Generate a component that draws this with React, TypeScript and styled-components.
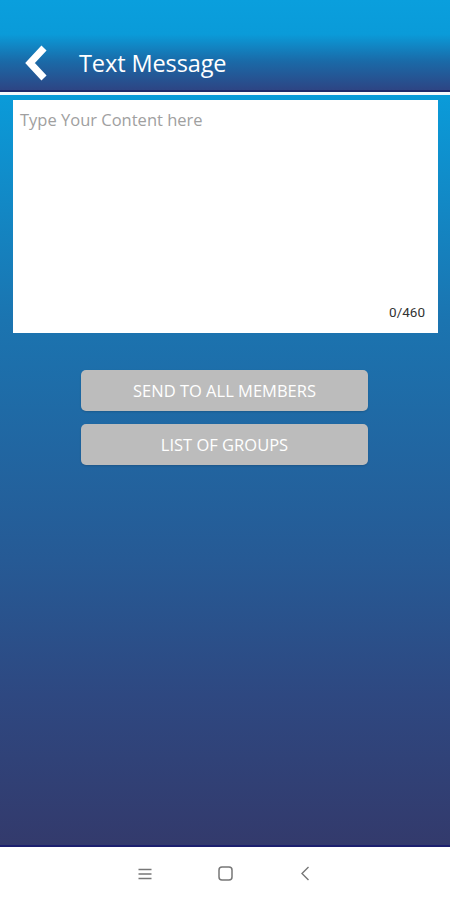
import React from "react";
import styled, { createGlobalStyle } from "styled-components";

const GlobalStyle = createGlobalStyle`
  html, body {
    margin: 0;
    padding: 0;
    width: 450px;
    height: 900px;
    overflow: hidden;
    font-family: "Open Sans", "Noto Sans", sans-serif;
  }
`;

const Screen = styled.div`
  width: 450px;
  height: 900px;
  display: flex;
  flex-direction: column;
`;

const Header = styled.header`
  height: 92px;
  flex-shrink: 0;
  display: flex;
  align-items: flex-end;
  padding: 0 0 7px 22px;
  box-sizing: border-box;
  background: linear-gradient(to bottom, #0a9fdd 0%, #0a9bd9 38%, #1a6aa8 68%, #2d4584 100%);
  border-bottom: 2px solid #1f2b6c;
  gap: 29px;
`;

const BackButton = styled.button`
  border: none;
  background: none;
  padding: 0;
  width: 28px;
  height: 36px;
  display: flex;
  align-items: center;
  cursor: pointer;
  margin-bottom: 2px;
`;

const Title = styled.h1`
  margin: 0;
  color: #ffffff;
  font-size: 23.5px;
  font-weight: 500;
  line-height: 40px;
  letter-spacing: -0.1px;
`;

const Divider = styled.div`
  height: 3px;
  background: #f4f8fc;
  flex-shrink: 0;
`;

const Body = styled.main`
  flex: 1;
  display: flex;
  flex-direction: column;
  align-items: center;
  padding: 5px 12px 0 13px;
  background: linear-gradient(to bottom, #0a9bd9 0%, #1b74b0 30%, #265a95 62%, #2e4881 80%, #333a6c 100%);
  border-bottom: 2px solid #1c1f6e;
`;

const MessageBox = styled.div`
  position: relative;
  width: 100%;
  height: 233px;
  background: #ffffff;
  box-sizing: border-box;
`;

const MessageInput = styled.textarea`
  width: 100%;
  height: 100%;
  border: none;
  outline: none;
  resize: none;
  box-sizing: border-box;
  padding: 8px 7px;
  font-family: "Open Sans", "Noto Sans", sans-serif;
  font-size: 16.5px;
  color: #333;
  background: transparent;

  &::placeholder {
    color: #a0a0a0;
  }
`;

const Counter = styled.span`
  position: absolute;
  right: 13px;
  bottom: 13px;
  font-size: 13.5px;
  color: #333;
  font-family: "Roboto", "Noto Sans", sans-serif;
`;

const Actions = styled.div`
  margin-top: 37px;
  display: flex;
  flex-direction: column;
  gap: 13px;
  width: 287px;
  margin-right: 2px;
`;

const ActionButton = styled.button`
  height: 41px;
  border: none;
  border-radius: 5px;
  background: #bcbcbc;
  color: #ffffff;
  font-family: "Open Sans", "Noto Sans", sans-serif;
  font-size: 16.5px;
  font-weight: 500;
  text-transform: uppercase;
  cursor: pointer;
  box-shadow: 0 1px 2px rgba(0, 0, 0, 0.15);
`;

const NavBar = styled.nav`
  height: 53px;
  flex-shrink: 0;
  background: #ffffff;
  display: flex;
  justify-content: center;
  align-items: center;
`;

const NavIcon = styled.div`
  width: 80px;
  display: flex;
  justify-content: center;
  align-items: center;
`;

const App: React.FC = () => {
  return (
    <>
      <GlobalStyle />
      <Screen>
        <Header>
          <BackButton aria-label="Back">
            <svg width="28" height="36" viewBox="0 0 28 36">
              <path d="M22 3 L8 18 L22 33" fill="none" stroke="#ffffff" strokeWidth="7" strokeLinejoin="miter" />
            </svg>
          </BackButton>
          <Title>Text Message</Title>
        </Header>
        <Divider />
        <Body>
          <MessageBox>
            <MessageInput placeholder="Type Your Content here" maxLength={460} />
            <Counter>0/460</Counter>
          </MessageBox>
          <Actions>
            <ActionButton>Send to all members</ActionButton>
            <ActionButton>List of groups</ActionButton>
          </Actions>
        </Body>
        <NavBar>
          <NavIcon>
            <svg width="14" height="12" viewBox="0 0 14 12">
              <path d="M0.5 1.5 H13.5 M0.5 6 H13.5 M0.5 10.5 H13.5" stroke="#777" strokeWidth="1.4" />
            </svg>
          </NavIcon>
          <NavIcon>
            <svg width="15" height="15" viewBox="0 0 15 15">
              <rect x="1" y="1" width="13" height="13" rx="3" fill="none" stroke="#777" strokeWidth="1.5" />
            </svg>
          </NavIcon>
          <NavIcon>
            <svg width="10" height="15" viewBox="0 0 10 15">
              <path d="M8.5 1 L2 7.5 L8.5 14" fill="none" stroke="#777" strokeWidth="1.4" />
            </svg>
          </NavIcon>
        </NavBar>
      </Screen>
    </>
  );
};

export default App;
